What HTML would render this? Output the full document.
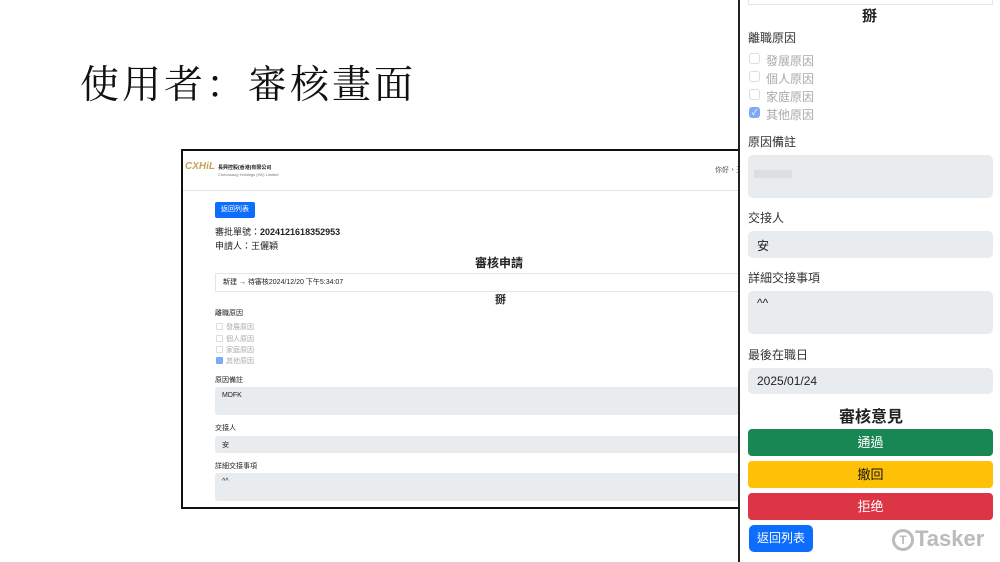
<!DOCTYPE html>
<html><head><meta charset="utf-8"><style>
*{margin:0;padding:0;box-sizing:border-box}
body{width:1000px;height:562px;background:#fff;position:relative;overflow:hidden;font-family:"Liberation Sans","Noto Sans CJK TC",sans-serif;color:#222}
.a{position:absolute;white-space:nowrap}
.title{left:80px;top:54px;font-family:"Noto Serif CJK SC",serif;font-size:39px;letter-spacing:3px;color:#111}
.shot{left:181px;top:149px;width:560px;height:360px;border:2px solid #111;background:#fff;overflow:hidden}
.field{background:#e9ecef;border-radius:3px}
.rp{left:738px;top:0;width:262px;height:562px;border-left:2px solid #222;background:#fff}
.btn{position:absolute;left:8px;width:243px;height:27px;border-radius:4px;text-align:center;line-height:27px;font-size:13px}
.cb{position:absolute;width:11px;height:11px;border:1px solid #ddd;border-radius:3px}
</style></head><body>
<div class="a title">使用者：審核畫面</div>

<div class="a shot">
  <div class="a" style="left:2px;top:10px;width:30px;height:20px;color:#c9a15a;font-size:10px;font-weight:bold;font-style:italic">CXHiL</div>
  <div class="a" style="left:35px;top:13px;font-size:5px;font-weight:bold">長興控股(香港)有限公司</div>
  <div class="a" style="left:35px;top:21px;font-size:4px;color:#777">Cheonsang Holdings (HK) Limited</div>
  <div class="a" style="left:532px;top:14px;font-size:7px;color:#555">你好，王</div>
  <div class="a" style="left:0;top:39px;width:560px;height:1px;background:#e3e3e3"></div>
  <div class="a" style="left:32px;top:51px;width:40px;height:16px;background:#0d6efd;border-radius:2px;color:#fff;font-size:7px;line-height:16px;text-align:center">返回列表</div>
  <div class="a" style="left:32px;top:74px;font-size:9px">審批單號：<b style="font-weight:600">2024121618352953</b></div>
  <div class="a" style="left:32px;top:88px;font-size:9px">申請人：王儷穎</div>
  <div class="a" style="left:292px;top:103px;font-size:12px;font-weight:bold">審核申請</div>
  <div class="a" style="left:32px;top:122px;width:540px;height:19px;border:1px solid #e5e5e5;font-size:7px;line-height:17px;padding-left:7px">新建 → 待審核2024/12/20 下午5:34:07</div>
  <div class="a" style="left:312px;top:140px;font-size:11px;font-weight:bold">掰</div>
  <div class="a" style="left:32px;top:157px;font-size:7px">離職原因</div>
  <div class="cb" style="left:33px;top:172px;width:7px;height:7px;border-radius:1px"></div><div class="a" style="left:43px;top:171px;font-size:7px;color:#aaa">發展原因</div>
  <div class="cb" style="left:33px;top:184px;width:7px;height:7px;border-radius:1px"></div><div class="a" style="left:43px;top:183px;font-size:7px;color:#aaa">個人原因</div>
  <div class="cb" style="left:33px;top:195px;width:7px;height:7px;border-radius:1px"></div><div class="a" style="left:43px;top:194px;font-size:7px;color:#aaa">家庭原因</div>
  <div class="cb" style="left:33px;top:206px;width:7px;height:7px;border-radius:1px;background:#7eaaf5;border-color:#7eaaf5"></div><div class="a" style="left:43px;top:205px;font-size:7px;color:#aaa">其他原因</div>
  <div class="a" style="left:32px;top:224px;font-size:7px">原因備註</div>
  <div class="a field" style="left:32px;top:236px;width:540px;height:28px;font-size:7px;padding:5px 7px">MDFK</div>
  <div class="a" style="left:32px;top:272px;font-size:7px">交接人</div>
  <div class="a field" style="left:32px;top:285px;width:540px;height:17px;font-size:7px;padding:4px 7px">安</div>
  <div class="a" style="left:32px;top:310px;font-size:7px">詳細交接事項</div>
  <div class="a field" style="left:32px;top:322px;width:540px;height:28px;font-size:7px;padding:5px 7px">^^</div>
</div>

<div class="a rp">
  <div class="a" style="left:8px;top:-2px;width:245px;height:7px;border:1px solid #e5e5e5;border-top:none"></div>
  <div class="a" style="left:122px;top:5px;font-size:15px;font-weight:bold">掰</div>
  <div class="a" style="left:8px;top:29px;font-size:12px;color:#333">離職原因</div>
  <div class="cb" style="left:9px;top:53px"></div><div class="a" style="left:26px;top:52px;font-size:12px;color:#aaa">發展原因</div>
  <div class="cb" style="left:9px;top:71px"></div><div class="a" style="left:26px;top:70px;font-size:12px;color:#aaa">個人原因</div>
  <div class="cb" style="left:9px;top:89px"></div><div class="a" style="left:26px;top:88px;font-size:12px;color:#aaa">家庭原因</div>
  <div class="cb" style="left:9px;top:107px;background:#7eaaf5;border-color:#7eaaf5;color:#fff;font-size:8px;line-height:10px;text-align:center">✓</div><div class="a" style="left:26px;top:106px;font-size:12px;color:#aaa">其他原因</div>
  <div class="a" style="left:8px;top:133px;font-size:12px;color:#333">原因備註</div>
  <div class="a field" style="left:8px;top:155px;width:245px;height:43px;border-radius:5px"><div class="a" style="left:6px;top:15px;width:38px;height:8px;background:#dcdfe2"></div></div>
  <div class="a" style="left:8px;top:209px;font-size:12px;color:#333">交接人</div>
  <div class="a field" style="left:8px;top:231px;width:245px;height:27px;border-radius:5px;font-size:12px;padding:6px 9px">安</div>
  <div class="a" style="left:8px;top:269px;font-size:12px;color:#333">詳細交接事項</div>
  <div class="a field" style="left:8px;top:291px;width:245px;height:43px;border-radius:5px;font-size:12px;padding:5px 9px">^^</div>
  <div class="a" style="left:8px;top:346px;font-size:12px;color:#333">最後在職日</div>
  <div class="a field" style="left:8px;top:368px;width:245px;height:26px;border-radius:5px;font-size:12px;padding:6px 9px">2025/01/24</div>
  <div class="a" style="left:99px;top:403px;font-size:16px;font-weight:bold">審核意見</div>
  <div class="btn" style="top:429px;background:#198754;color:#fff;width:245px">通過</div>
  <div class="btn" style="top:461px;background:#ffc107;color:#111;width:245px">撤回</div>
  <div class="btn" style="top:493px;background:#dc3545;color:#fff;width:245px">拒绝</div>
  <div class="a" style="left:9px;top:525px;width:64px;height:27px;background:#0d6efd;border-radius:5px;color:#fff;font-size:12px;line-height:27px;text-align:center">返回列表</div>
  <div class="a" style="left:152px;top:529px;width:22px;height:22px;border:3px solid #bbb;border-radius:50%;color:#bbb;font-size:12px;font-weight:bold;text-align:center;line-height:16px">T</div>
  <div class="a" style="left:175px;top:526px;font-size:22px;font-weight:bold;color:#bbb">Tasker</div>
</div>
</body></html>
